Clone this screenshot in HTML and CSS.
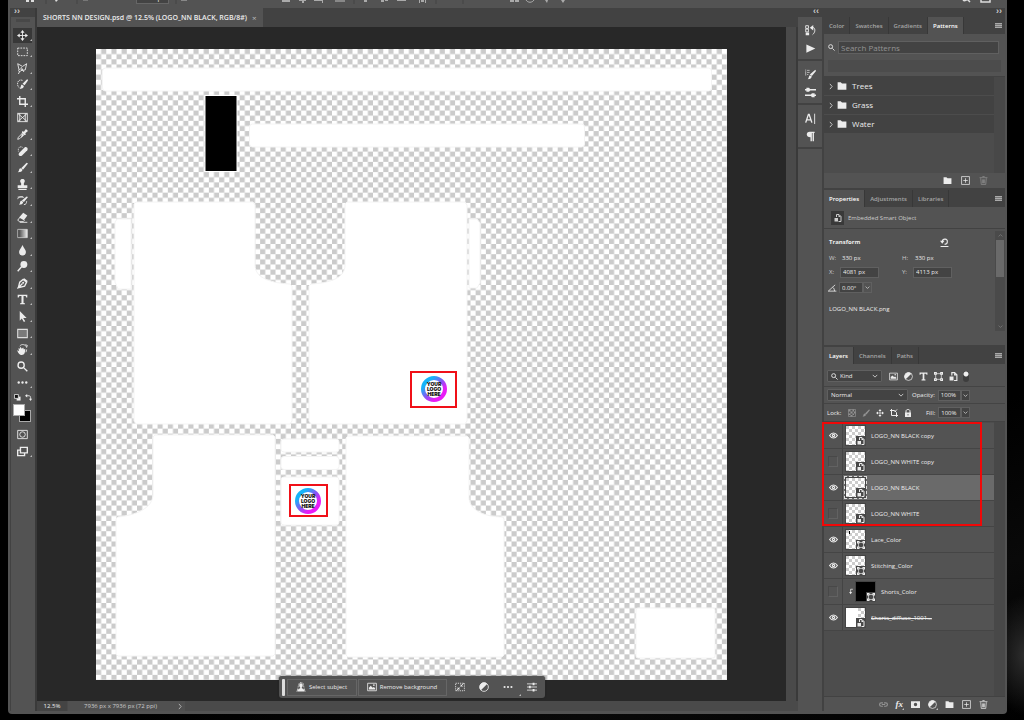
FILE: index.html
```html
<!DOCTYPE html>
<html lang="en">
<head>
<meta charset="utf-8">
<title>SHORTS NN DESIGN.psd</title>
<link rel="stylesheet" href="styles.css">
</head>
<body>
<svg class="defs" aria-hidden="true">
  <defs>
    <symbol id="move" viewBox="0 0 16 16"><path class="s" d="M8 2v12M2 8h12"/><path class="f" d="M8 0l3 4H5zM8 16l3-4H5zM0 8l4-3v6zM16 8l-4-3v6z"/></symbol>
    <symbol id="marquee" viewBox="0 0 16 16"><path class="s" stroke-dasharray="2.5 1.5" d="M1 3h14v11H1z"/></symbol>
    <symbol id="lasso" viewBox="0 0 16 16"><path class="s" d="M3 10L1 1l7 4 6-4-2 9-6 1M3 10c-2 2 1 4 3 1s-2-3-3-1M4 12l-2 4M6 6l4 7"/></symbol>
    <symbol id="quick" viewBox="0 0 16 16"><path class="s" stroke-dasharray="2 1" d="M8 2C3 0 0 4 1 9c1 4 4 5 6 4"/><path class="f" d="M15 0l1 2-5 7-3-2zM7 8l3 2c0 3-3 4-6 4 2-1 1-5 3-6z"/></symbol>
    <symbol id="crop" viewBox="0 0 16 16"><path class="b" d="M4 0v12h12M0 4h12v12"/></symbol>
    <symbol id="frame" viewBox="0 0 16 16"><path class="s" d="M1 2h14v12H1zM1 2l14 12M15 2L1 14M4 2v12M12 2v12"/></symbol>
    <symbol id="dropper" viewBox="0 0 16 16"><path class="s" d="M9 5l2 2-7 7-3 1 1-3z"/><path class="f" d="M8 3l2 1 3-4 3 3-4 3 1 2-2 1-4-4zM7 6l3 3-4 4z"/></symbol>
    <symbol id="heal" viewBox="0 0 16 16"><path class="f" d="M11 2c2-2 6 1 4 4l-8 8c-3 2-6-1-4-4z"/><path class="s" stroke-dasharray="1.5 1" d="M8 2C5 0 2 2 2 5v3"/></symbol>
    <symbol id="brush" viewBox="0 0 16 16"><path class="f" d="M14 1l2 1-7 9-3-2zM5 9l3 2c0 3-3 4-7 4 3-2 1-5 4-6z"/></symbol>
    <symbol id="stamp" viewBox="0 0 16 16"><path class="f" d="M8 0c4 0 4 4 2 6v3h5v4H1V9h5V6C4 4 4 0 8 0zM2 14h12v2H2z"/></symbol>
    <symbol id="history" viewBox="0 0 16 16"><path class="f" d="M14 2l2 1-6 7-3-2zM6 8l3 2c0 3-3 4-6 4 2-2 1-5 3-6z"/><path class="s" d="M1 3h8M1 6c1-4 7-5 9-2M10 14c3 0 4-2 4-5"/></symbol>
    <symbol id="eraser" viewBox="0 0 16 16"><path class="f" d="M9 1l6 4-5 7-7-4z"/><path class="s" d="M4 8l-3 4 3 2h5l2-2M4 15h11"/></symbol>
    <symbol id="gradient" viewBox="0 0 16 16"><path fill="url(#fade)" stroke="#ddd" d="M1 2h14v12H1z"/></symbol>
    <symbol id="drop" viewBox="0 0 16 16"><path class="f" d="M8 0c2 5 5 7 5 10 0 7-10 7-10 0 0-3 3-5 5-10z"/></symbol>
    <symbol id="dodge" viewBox="0 0 16 16"><circle class="f" cx="10" cy="5" r="5"/><path class="b" d="M7 8l-6 7"/></symbol>
    <symbol id="pen" viewBox="0 0 16 16"><path class="b" d="M2 14L4 6l5-4 5 4-3 6-9 2 6-6M10 1l5 4"/><circle class="f" cx="9" cy="7" r="1.5"/></symbol>
    <symbol id="type" viewBox="0 0 16 16"><path class="f" d="M1 1h14v4h-1.500l-1-2H9.500v10l2 .5V15h-7v-1.500l2-.5V3H3.500l-1 2H1z"/></symbol>
    <symbol id="arrow" viewBox="0 0 16 16"><path class="f" d="M4 0l10 10H9l3 5-2 1-3-5-3 3z"/></symbol>
    <symbol id="rect" viewBox="0 0 16 16"><path fill="#7a7a7a" stroke="#ddd" stroke-width="1.500" d="M1 2h14v12H1z"/></symbol>
    <symbol id="rotate" viewBox="0 0 16 16"><path class="f" d="M2 6l2 1 1-3 2 3 2-2 1 3 2-1c0 5-1 9-5 9s-6-5-7-7l3 1z"/><path class="s" d="M4 3c3-4 9-2 10 2M14 8l-1 4M12 1l3 1-1 3"/></symbol>
    <symbol id="zoom" viewBox="0 0 16 16"><circle class="b" cx="6" cy="6" r="4.500"/><path class="b" d="M10 10l5 5"/></symbol>
    <symbol id="dots" viewBox="0 0 16 16"><circle class="f" cx="2.500" cy="8" r="1.700"/><circle class="f" cx="8" cy="8" r="1.700"/><circle class="f" cx="13.500" cy="8" r="1.700"/></symbol>
    <symbol id="defcol" viewBox="0 0 16 16"><path class="f" d="M6 6h9v9H6z"/><path fill="#111" stroke="#ddd" stroke-width="2" d="M1 1h9v9H1z"/></symbol>
    <symbol id="swap" viewBox="0 0 16 16"><path class="b" d="M4 4h5c3 0 4 2 4 8"/><path class="f" d="M0 4l5-4v8zM9 11h7l-3 5z"/></symbol>
    <symbol id="mask" viewBox="0 0 16 16"><path class="s" d="M1 2h14v12H1z"/><circle class="s" cx="8" cy="8" r="4"/></symbol>
    <symbol id="screens" viewBox="0 0 16 16"><path class="b" d="M5 2h10v8H5zM4 6H1v8h10v-3"/></symbol>
    <symbol id="versions" viewBox="0 0 16 16"><path class="s" d="M1 1h4v4H1zM1 6h4v4H1zM9 4h4c2 2 2 7-2 10"/><path class="f" d="M1 11h5v4H1zM7 4l5-4v8z"/></symbol>
    <symbol id="play" viewBox="0 0 16 16"><path class="f" d="M2 2l13 6-13 6z"/></symbol>
    <symbol id="brushes" viewBox="0 0 16 16"><path class="s" stroke-dasharray="1 .7" d="M1 1v9M3 2h4M3 5h4M3 8h2"/><path class="f" d="M15 1l1 2-6 7-3-2zM7 9l3 2c-1 3-3 4-6 4 2-2 1-4 3-6z"/></symbol>
    <symbol id="sliders" viewBox="0 0 16 16"><path class="b" d="M0 4h16M0 12h16"/><path class="f" d="M2 1h4l2 3-2 3H2zM10 9h4v6h-4l-2-3z"/></symbol>
    <symbol id="glyphs" viewBox="0 0 16 16"><path class="b" d="M1 14L5 2h1l4 12M3 10h5"/><path class="s" d="M14 1v15"/></symbol>
    <symbol id="para" viewBox="0 0 16 16"><path class="f" d="M7 1h7v2h-1v12h-2V3h-1v12H8V9C1 9 1 1 7 1z"/></symbol>
    <symbol id="folder" viewBox="0 0 16 16"><path class="f" d="M1 2h5l2 2h7v10H1z"/></symbol>
    <symbol id="plus" viewBox="0 0 16 16"><path class="s" d="M1 1h14v14H1zM8 4v8M4 8h8"/></symbol>
    <symbol id="trash" viewBox="0 0 16 16"><path class="s" d="M3 4l1 11h8l1-11M1 3h14M6 1h4M6 6v7M8 6v7M10 6v7"/></symbol>
    <symbol id="smart" viewBox="0 0 16 16"><path class="b" d="M5 6V1h5l4 4v10H9"/><path class="f" d="M9 1l5 5H9zM1 8h7v7H1z"/></symbol>
    <symbol id="undo" viewBox="0 0 16 16"><path class="b" d="M4 6c1-6 10-5 9 1 0 3-3 4-5 4M1 15h14"/><path class="f" d="M0 5h8l-4 5z"/></symbol>
    <symbol id="angle" viewBox="0 0 16 16"><path class="s" d="M13 3L2 13h13M9 7c2 1 3 3 3 6"/></symbol>
    <symbol id="down" viewBox="0 0 16 16"><path class="b" d="M2 5l6 6 6-6"/></symbol>
    <symbol id="up" viewBox="0 0 16 16"><path class="b" d="M2 11l6-6 6 6"/></symbol>
    <symbol id="right" viewBox="0 0 16 16"><path class="b" d="M5 1l6 7-6 7"/></symbol>
    <symbol id="image" viewBox="0 0 16 16"><path class="s" d="M1 2h14v12H1z"/><path class="f" d="M3 12V9l3-3 3 3 2-1 2 2v2z"/><circle class="f" cx="11" cy="5" r="1.300"/></symbol>
    <symbol id="half" viewBox="0 0 16 16"><circle class="s" cx="8" cy="8" r="7"/><path class="f" d="M13 3A7 7 0 003 13z"/></symbol>
    <symbol id="path" viewBox="0 0 16 16"><path class="s" d="M3 3h10v10H3z"/><path class="f" d="M0 0h5v5H0zM11 0h5v5h-5zM0 11h5v5H0zM11 11h5v5h-5z"/><path fill="#535353" d="M2 2h1v1H2zM13 2h1v1h-1zM2 13h1v1H2zM13 13h1v1h-1z"/></symbol>
    <symbol id="grid" viewBox="0 0 16 16"><path class="s" d="M1 1h14v14H1z"/><path class="f" d="M1 1h4v4H1zM9 1h3v4H9zM5 5h4v4H5zM12 5h3v4h-3zM1 9h4v3H1zM9 9h3v3H9zM5 12h4v3H5z"/></symbol>
    <symbol id="artlock" viewBox="0 0 16 16"><path class="b" d="M3 0v13h13M0 3h9l4 4v9M9 6l5-5"/></symbol>
    <symbol id="lock" viewBox="0 0 16 16"><path class="b" d="M4 8V4c0-4 8-4 8 0v4"/><path class="f" d="M2 7h12v9H2z"/><path class="k" d="M8 10v3"/></symbol>
    <symbol id="eye" viewBox="0 0 16 16"><path class="b" d="M1 8c4-6 10-6 14 0-4 6-10 6-14 0z"/><circle class="f" cx="8" cy="8" r="3"/><circle fill="#535353" cx="8" cy="8" r="1"/></symbol>
    <symbol id="link" viewBox="0 0 16 16"><path class="b" d="M7 5H4c-4 0-4 6 0 6h3M9 5h3c4 0 4 6 0 6H9M5 8h6"/></symbol>
    <symbol id="addmask" viewBox="0 0 16 16"><path class="f" fill-rule="evenodd" d="M0 2h16v12H0zM8 5a3 3 0 100 6 3 3 0 000-6z"/></symbol>
    <symbol id="person" viewBox="0 0 16 16"><path class="s" stroke-dasharray="1.500 1" d="M1 15C3 12 3 10 4 5c1-6 8-6 8 0 1 5 1 7 3 10"/><path class="f" d="M8 2c4 0 3 6 1 7 1 2 5 2 5 6H2c0-4 4-4 5-6-2-1-3-7 1-7z"/></symbol>
    <symbol id="shrink" viewBox="0 0 16 16"><path class="s" stroke-dasharray="2 1.500" d="M1 2h14v12H1z"/><path class="s" d="M14 2l-5 5M2 14l5-5"/><path class="f" d="M9 3v4h4zM3 9h4v4z"/></symbol>
    <symbol id="tune" viewBox="0 0 16 16"><path class="s" d="M0 3h16M0 8h16M0 13h16"/><path class="f" d="M9 1h3v4H9zM3 6h3v4H3zM9 11h3v4H9z"/></symbol>
    <symbol id="clip" viewBox="0 0 16 16"><path class="b" d="M13 2H7v9"/><path class="f" d="M3 9h8l-4 6z"/></symbol>
    <linearGradient id="fade"><stop offset="0" stop-color="#333"/><stop offset="1" stop-color="#eee"/></linearGradient>
    <linearGradient id="ring" x1="0" y1="0" x2="1" y2="1"><stop offset="0.2" stop-color="#16b4f8"/><stop offset="0.5" stop-color="#8a54f4"/><stop offset="0.75" stop-color="#e81cf6"/></linearGradient>
    <pattern id="checker" x="96" y="49" width="10.26" height="10.26" patternUnits="userSpaceOnUse"><path fill="#fff" d="M0 0h10.260v10.260H0z"/><path fill="#cbcbcb" d="M5.130 0h5.130v5.130H5.130zM0 5.130h5.130v5.130H0z"/></pattern>
    <g id="logo"><circle r="11" fill="#fff" stroke="url(#ring)" stroke-width="4"/><text class="logo-text" text-anchor="middle"><tspan x="0" y="-3">YOUR</tspan><tspan x="0" y="2">LOGO</tspan><tspan x="0" y="7">HERE</tspan></text></g>
  </defs>
</svg>

<main class="window">
  <header class="options">
    <svg class="options-left" viewBox="0 0 126 8" width="126" height="8"><path fill="#ddd" d="M16 0h3v2h-3zM21 0h3v2h-3zM45 0h3l-2 2z"/><path fill="#777" d="M73 0h5v1h-5z"/><path stroke="#444" d="M36 0v4M67 0v4"/></svg>
    <select class="mode" aria-label="Auto-select"><option>Group</option></select>
    <svg class="options-mid" viewBox="167 0 460 8" width="460" height="8"><path fill="#888" d="M179 0h6v1h-6zM333 0h10v2h-10z"/><path fill="#aaa" d="M280 0h8v2h-8zM297 0h7v1h-7zM300 1h2v2h-2zM312 0h8v1h-8zM320 0h1v3h-1zM362 0h3v2h-3zM379 0h3v2h-3zM383 0h3v1h-3zM395 0h9v1h-9zM417 0h1v3h-1zM423 0h1v3h-1zM419 0h3v2h-3zM508 0h4v2h-4zM513 0h4v2h-4zM543 0h3l-1 3zM559 0h4l-2 3z"/><path fill="none" stroke="#aaa" d="M524 0c2 3 6 3 8 0"/><path stroke="#444" d="M174 0v4M352 0v4M434 0v4M461 0v4"/></svg>
    <svg class="options-right" viewBox="955 0 50 8" width="50" height="8"><path fill="none" stroke="#ddd" stroke-width="1.500" d="M963 0c1 1 3 1 4-1l3 3M981 0v2h9V0"/></svg>
  </header>

  <div class="workspace">
    <aside class="toolbox">
      <div class="collapse">››</div>
      <div class="grip"></div>
      <div class="tools">
        <button class="tool active" aria-label="Move"><svg><use href="#move"/></svg></button>
        <button class="tool" aria-label="Marquee"><svg><use href="#marquee"/></svg></button>
        <button class="tool" aria-label="Lasso"><svg><use href="#lasso"/></svg></button>
        <button class="tool" aria-label="Quick selection"><svg><use href="#quick"/></svg></button>
        <button class="tool" aria-label="Crop"><svg><use href="#crop"/></svg></button>
        <button class="tool plain" aria-label="Frame"><svg><use href="#frame"/></svg></button>
        <button class="tool" aria-label="Eyedropper"><svg><use href="#dropper"/></svg></button>
        <button class="tool" aria-label="Healing brush"><svg><use href="#heal"/></svg></button>
        <button class="tool" aria-label="Brush"><svg><use href="#brush"/></svg></button>
        <button class="tool" aria-label="Clone stamp"><svg><use href="#stamp"/></svg></button>
        <button class="tool" aria-label="History brush"><svg><use href="#history"/></svg></button>
        <button class="tool" aria-label="Eraser"><svg><use href="#eraser"/></svg></button>
        <button class="tool" aria-label="Gradient"><svg><use href="#gradient"/></svg></button>
        <button class="tool" aria-label="Blur"><svg><use href="#drop"/></svg></button>
        <button class="tool" aria-label="Dodge"><svg><use href="#dodge"/></svg></button>
        <button class="tool" aria-label="Pen"><svg><use href="#pen"/></svg></button>
        <button class="tool" aria-label="Type"><svg><use href="#type"/></svg></button>
        <button class="tool" aria-label="Path selection"><svg><use href="#arrow"/></svg></button>
        <button class="tool" aria-label="Rectangle"><svg><use href="#rect"/></svg></button>
        <button class="tool" aria-label="Rotate view"><svg><use href="#rotate"/></svg></button>
        <button class="tool plain" aria-label="Zoom"><svg><use href="#zoom"/></svg></button>
        <button class="tool" aria-label="More tools"><svg><use href="#dots"/></svg></button>
      </div>
      <div class="color-actions">
        <button aria-label="Default colors"><svg><use href="#defcol"/></svg></button>
        <button aria-label="Swap colors"><svg><use href="#swap"/></svg></button>
      </div>
      <div class="swatches"><button class="back" aria-label="Background color"></button><button class="fore" aria-label="Foreground color"></button></div>
      <button class="tool plain view" aria-label="Quick mask"><svg><use href="#mask"/></svg></button>
      <button class="tool view" aria-label="Screen mode"><svg><use href="#screens"/></svg></button>
    </aside>

    <section class="document">
      <div class="doc-tabs"><div class="doc-tab"><span>SHORTS NN DESIGN.psd @ 12.5% (LOGO_NN BLACK, RGB/8#)</span><button aria-label="Close">×</button></div></div>
      <div class="stage">
        <div class="canvas">
          <svg class="artboard" viewBox="96 49 631 631">
            <path fill="url(#checker)" d="M96 49h631v631H96z"/>
            <g class="piece">
              <rect x="102.500" y="68" width="609" height="23" rx="3"/>
              <rect x="249.500" y="124" width="335" height="23" rx="3"/>
              <path d="M117 219h14v70h-13l-3-7v-60z"/><path d="M469 219h8l3 4v60l-3 5h-8z"/>
              <path d="M136 202h117l2 3v60c0 14 18 18 35 19l2 2v135l-2 3H136l-2-3V204z"/>
              <path d="M347 202h118l2 3v216l-2 3H311l-2-3V286l2-2c17-1 34-5 34-19v-61z"/>
              <path d="M155 435h118l2 2v217l-2 2H118l-2-2V519l2-2c17-2 35-8 35-23v-57z"/>
              <path d="M348 436h119l2 2v59c0 14 17 20 34 20l1 2v136l-2 2H348l-2-2V438z"/>
              <rect x="281" y="439" width="58" height="13" rx="3"/>
              <rect x="281" y="456.500" width="58" height="13" rx="3"/>
              <rect x="281" y="477" width="58" height="48" rx="3"/>
              <rect x="636" y="608" width="79" height="50" rx="2"/>
            </g>
            <rect x="205" y="95.500" width="32" height="76" stroke="#fff"/>
            <use href="#logo" x="434" y="389"/>
            <use href="#logo" x="308" y="501"/>
            <g fill="none" stroke="#f01018" stroke-width="2"><rect x="411" y="372" width="45" height="35"/><rect x="290" y="485" width="37" height="31"/></g>
          </svg>
          <div class="taskbar">
            <span class="handle"></span>
            <button class="task"><svg><use href="#person"/></svg>Select subject</button>
            <button class="task wide"><svg><use href="#image"/></svg>Remove background</button>
            <button class="task-icon" aria-label="Transform"><svg><use href="#shrink"/></svg></button>
            <button class="task-icon" aria-label="Adjustment"><svg><use href="#half"/></svg></button>
            <button class="task-icon more" aria-label="More"><svg><use href="#dots"/></svg></button>
            <button class="task-icon" aria-label="Properties"><svg><use href="#tune"/></svg></button>
          </div>
        </div>
        <div class="doc-scroll"></div>
      </div>
      <footer class="status"><span class="zoom-level">12.5%</span><button class="doc-info">7936 px x 7936 px (72 ppi)<svg><use href="#right"/></svg></button></footer>
    </section>

    <aside class="dock">
      <div class="collapse end">‹‹</div>
      <div class="dock-group"><button aria-label="Versions"><svg><use href="#versions"/></svg></button><button aria-label="Actions"><svg><use href="#play"/></svg></button></div>
      <div class="dock-group"><button aria-label="Brushes"><svg><use href="#brushes"/></svg></button><button aria-label="Brush settings"><svg><use href="#sliders"/></svg></button></div>
      <div class="dock-group"><button aria-label="Character"><svg><use href="#glyphs"/></svg></button><button aria-label="Paragraph"><svg><use href="#para"/></svg></button></div>
      <div class="dock-rest"></div>
    </aside>

    <aside class="panels">
      <div class="collapse end">››</div>
      <section class="panel patterns">
        <nav class="tabs"><button>Color</button><button>Swatches</button><button>Gradients</button><button class="on">Patterns</button><span class="menu"></span></nav>
        <label class="search"><svg><use href="#zoom"/></svg><input type="text" placeholder="Search Patterns"></label>
        <div class="recent"></div>
        <div class="pattern-list">
          <button><svg class="chev"><use href="#right"/></svg><svg><use href="#folder"/></svg>Trees</button>
          <button><svg class="chev"><use href="#right"/></svg><svg><use href="#folder"/></svg>Grass</button>
          <button><svg class="chev"><use href="#right"/></svg><svg><use href="#folder"/></svg>Water</button>
        </div>
        <footer class="panel-foot"><button aria-label="New group"><svg><use href="#folder"/></svg></button><button aria-label="New pattern"><svg><use href="#plus"/></svg></button><button class="dim" aria-label="Delete"><svg><use href="#trash"/></svg></button></footer>
      </section>

      <section class="panel properties">
        <nav class="tabs"><button class="on">Properties</button><button>Adjustments</button><button>Libraries</button><span class="menu"></span></nav>
        <div class="object"><span class="object-icon"><svg><use href="#smart"/></svg></span>Embedded Smart Object</div>
        <div class="props">
          <div class="props-main">
            <div class="transform"><b>Transform</b><button aria-label="Reset"><svg><use href="#undo"/></svg></button></div>
            <div class="fields">
              <span>W:</span><span class="value">330 px</span><span>H:</span><span class="value">330 px</span>
              <label for="px">X:</label><input id="px" type="text" value="4081 px"><label for="py">Y:</label><input id="py" type="text" value="4113 px">
            </div>
            <div class="angle"><svg><use href="#angle"/></svg><input type="text" value="0.00°" aria-label="Angle"><button aria-label="Angle presets"><svg><use href="#down"/></svg></button></div>
            <p class="filename">LOGO_NN BLACK.png</p>
          </div>
          <div class="bar"><svg><use href="#up"/></svg><span class="thumb"></span><svg><use href="#down"/></svg></div>
        </div>
      </section>

      <section class="panel layers">
        <nav class="tabs"><button class="on">Layers</button><button>Channels</button><button>Paths</button><span class="menu"></span></nav>
        <div class="filter">
          <label class="kind"><svg><use href="#zoom"/></svg><select aria-label="Filter"><option>Kind</option></select><svg class="chev"><use href="#down"/></svg></label>
          <button aria-label="Pixel"><svg><use href="#image"/></svg></button><button aria-label="Adjustment"><svg><use href="#half"/></svg></button><button aria-label="Type"><svg><use href="#type"/></svg></button><button aria-label="Shape"><svg><use href="#path"/></svg></button><button aria-label="Smart object"><svg><use href="#smart"/></svg></button><button class="toggle" aria-label="Filter on"></button>
        </div>
        <div class="blend">
          <label class="blend-mode"><select aria-label="Blend mode"><option>Normal</option></select><svg class="chev"><use href="#down"/></svg></label>
          <label class="amount">Opacity:<input type="text" value="100%"></label><button class="drop" aria-label="Opacity slider"><svg><use href="#down"/></svg></button>
        </div>
        <div class="locks">
          <span>Lock:</span><button class="dim" aria-label="Lock transparency"><svg><use href="#grid"/></svg></button><button class="dim" aria-label="Lock pixels"><svg><use href="#brush"/></svg></button><button aria-label="Lock position"><svg><use href="#move"/></svg></button><button aria-label="Lock artboard"><svg><use href="#artlock"/></svg></button><button aria-label="Lock all"><svg><use href="#lock"/></svg></button>
          <label class="amount">Fill:<input type="text" value="100%"></label><button class="drop" aria-label="Fill slider"><svg><use href="#down"/></svg></button>
        </div>
        <div class="layer-area">
          <ul class="layer-list">
            <li><button class="vis" aria-label="Hide"><svg><use href="#eye"/></svg></button><span class="thumbnail"><svg class="badge"><use href="#smart"/></svg></span>LOGO_NN BLACK copy</li>
            <li><button class="vis off" aria-label="Show"></button><span class="thumbnail"><svg class="badge"><use href="#smart"/></svg></span>LOGO_NN WHITE copy</li>
            <li class="selected"><button class="vis" aria-label="Hide"><svg><use href="#eye"/></svg></button><span class="thumbnail"><svg class="badge"><use href="#smart"/></svg></span>LOGO_NN BLACK</li>
            <li><button class="vis off" aria-label="Show"></button><span class="thumbnail"><svg class="badge"><use href="#smart"/></svg></span>LOGO_NN WHITE</li>
            <li><button class="vis" aria-label="Hide"><svg><use href="#eye"/></svg></button><span class="thumbnail lace"><svg class="badge"><use href="#path"/></svg></span>Lace_Color</li>
            <li><button class="vis" aria-label="Hide"><svg><use href="#eye"/></svg></button><span class="thumbnail"><svg class="badge"><use href="#path"/></svg></span>Stitching_Color</li>
            <li><button class="vis off" aria-label="Show"></button><svg class="clip"><use href="#clip"/></svg><span class="thumbnail black"><svg class="badge"><use href="#path"/></svg></span>Shorts_Color</li>
            <li><button class="vis" aria-label="Hide"><svg><use href="#eye"/></svg></button><span class="thumbnail diffuse"><svg class="badge"><use href="#smart"/></svg></span><s>Shorts_diffuse_1001...</s></li>
          </ul>
          <div class="highlight"></div>
        </div>
        <footer class="panel-foot"><button class="dim" aria-label="Link layers"><svg><use href="#link"/></svg></button><button class="fx more">fx</button><button aria-label="Add mask"><svg><use href="#addmask"/></svg></button><button class="more" aria-label="Adjustment layer"><svg><use href="#half"/></svg></button><button aria-label="New group"><svg><use href="#folder"/></svg></button><button aria-label="New layer"><svg><use href="#plus"/></svg></button><button aria-label="Delete"><svg><use href="#trash"/></svg></button></footer>
      </section>
    </aside>
  </div>
</main>
</body>
</html>
```
FILE: styles.css
```css
* { box-sizing: border-box; }
body {
  margin: 0;
  height: 100vh;
  padding: 0 17px 6px 8px;
  overflow: hidden;
  background:
    radial-gradient(ellipse 34px 60px at 100% 655px, #2c2c2c, transparent),
    linear-gradient(160deg, transparent 70%, #090909 85%, #000) #000;
  font: 500 6px/10px "Open Sans", "Noto Sans", sans-serif;
  color: #ececec;
}
button, input, select {
  font: inherit;
  color: inherit;
  border: 0;
  padding: 0;
  margin: 0;
  background: none;
  appearance: none;
  border-radius: 0;
}
button { display: flex; align-items: center; justify-content: center; }
svg { width: 10px; height: 10px; flex: none; display: block; }
.defs { position: absolute; width: 0; height: 0; }
.f { fill: currentColor; }
.s { fill: none; stroke: currentColor; stroke-width: 1.3; }
.b { fill: none; stroke: currentColor; stroke-width: 2; }
.k { fill: none; stroke: #444; stroke-width: 1.5; }

.window {
  height: 100%;
  display: flex;
  flex-direction: column;
  background: #424242;
  border: solid #535353;
  border-width: 0 2px 3px;
  border-radius: 0 0 4px 4px;
  overflow: hidden;
}
.options { display: flex; align-items: flex-start; height: 8px; background: #535353; overflow: hidden; flex: none; }
.options-left, .options-mid, .options-right { width: auto; height: 8px; }
.options-right { margin-left: auto; }
.mode { width: 33px; height: 12px; margin-top: -8px; padding-left: 4px; background: #434343; border: 1px solid #666; font-size: 7px; }
.workspace { flex: 1; min-height: 0; display: flex; }
.collapse { height: 9px; font: bold 9px/7px "Liberation Sans", sans-serif; color: #ccc; padding: 0 3px; background: #424242; flex: none; }
.collapse.end { text-align: right; }

.toolbox { width: 27px; flex: none; display: flex; flex-direction: column; padding: 0 2px 0 1px; background: linear-gradient(90deg, #424242 1px, #535353 1px, #535353 25px, #3a3a3a 25px); }
.grip { height: 10px; padding: 2px 5px; }
.grip::before { content: ""; display: block; height: 3px; background: #484848; }
.tools { display: grid; grid-template-rows: repeat(22, 1fr); height: 364px; flex: none; }
.tool { position: relative; width: 23px; }
.tool svg { width: 11px; height: 11px; }
.tool::after, .more::after { content: ""; position: absolute; right: 2px; bottom: 3px; border: 1px solid; border-color: transparent #bbb #bbb transparent; }
.tool.plain::after { display: none; }
.tool.active { background: linear-gradient(#383838, #383838) 2px 1px / 19px 15px no-repeat; }
.color-actions { display: flex; justify-content: center; gap: 4px; height: 13px; align-items: center; }
.color-actions svg { width: 7px; height: 7px; }
.swatches { position: relative; height: 20px; margin-bottom: 2px; }
.fore, .back { position: absolute; width: 12px; height: 12px; border: 1px solid #aaa; }
.fore { left: 2px; top: 0; background: #fff; }
.back { left: 8px; top: 6px; background: #000; }
.view { height: 17px; }

.document { flex: 1; min-width: 0; display: flex; flex-direction: column; }
.doc-tabs { height: 19px; flex: none; display: flex; background: #424242; }
.doc-tab { display: flex; align-items: center; gap: 5px; padding: 0 6px; background: #535353; font-size: 7px; font-weight: 600; white-space: nowrap; }
.doc-tab button { font-size: 8px; font-weight: 400; color: #bbb; }
.stage { flex: 1; min-height: 0; display: flex; }
.canvas { position: relative; flex: 1; min-width: 0; padding: 22px 0 21px; background: #282828; }
.artboard { width: 100%; height: 100%; }
.piece { fill: #fff; stroke: #f4f4f4; stroke-width: 1; }
.logo-text { font: 900 5px "Inter", sans-serif; fill: #111; }
.doc-scroll { width: 12px; background: linear-gradient(90deg, #4a4a4a 10px, #3a3a3a 10px); }
.taskbar { position: absolute; bottom: 3px; left: 50%; transform: translateX(-50%); display: flex; align-items: center; height: 22px; width: 266px; padding: 0 1px 0 3px; background: #535353; border-radius: 3px; box-shadow: 0 0 2px #222; }
.handle { width: 3px; height: 17px; margin-right: 2px; background: #ddd; border-radius: 1px; flex: none; }
.task { height: 17px; width: 70px; gap: 3px; border: 1px solid #666; white-space: nowrap; flex: none; }
.task.wide { width: 89px; margin: 0 2px 0 1px; }
.task-icon { flex: 1; height: 17px; position: relative; }
.more { position: relative; }
.status { display: flex; height: 10px; flex: none; background: #4a4a4a; color: #ccc; }
.zoom-level { width: 30px; text-align: center; background: #444; color: #eee; }
.doc-info { width: 117px; gap: 20px; padding-left: 14px; margin-left: 1px; background: #505050; }
.doc-info svg { width: 6px; height: 7px; }

.dock { width: 24px; margin-right: 2px; flex: none; display: flex; flex-direction: column; gap: 2px; }
.dock .collapse { margin-bottom: -2px; }
.dock-group { height: 42px; padding-top: 4px; display: grid; grid-template-rows: 18px 18px; background: #535353; }
.dock-group button { width: 24px; }
.dock-group svg { width: 11px; height: 11px; }
.dock-rest { flex: 1; background: #535353; }

.panels { width: 181px; flex: none; display: flex; flex-direction: column; }
.panel { background: #535353; display: flex; flex-direction: column; flex: none; }
.patterns { height: 171px; margin-bottom: 2px; }
.properties { height: 155px; margin-bottom: 2px; }
.layers { flex: 1; min-height: 0; }
.tabs { display: flex; height: 17px; flex: none; background: #424242; font-weight: 600; color: #a6a6a6; }
.tabs button { padding: 0 5px; border-right: 1px solid #383838; font-weight: 600; }
.tabs .on { background: #535353; color: #fff; }
.menu { width: 7px; height: 5px; margin: 6px 3px 0 auto; background: repeating-linear-gradient(#aaa 0 1px, #777 1px 2px); }
.search { display: flex; align-items: center; height: 14px; margin: 6px 6px 6px 4px; gap: 3px; }
.search svg { width: 7px; height: 7px; }
.search input { flex: 1; min-width: 0; height: 13px; padding: 0 2px; background: #434343; border: 1px solid #606060; font-size: 8px; font-weight: 400; }
.search input::placeholder { color: #949494; opacity: 1; }
.recent { height: 12px; margin: 0 4px 4px; background: #4c4c4c; }
.pattern-list { flex: 1; border-top: 1px solid #424242; padding-right: 11px; background: linear-gradient(270deg, #484848 11px, #4c4c4c 11px); }
.pattern-list button { width: 100%; height: 18px; margin-bottom: 1px; padding-left: 4px; gap: 3px; justify-content: flex-start; background: #424242; font-size: 8px; }
.pattern-list button svg:nth-child(2) { margin-right: 2px; }
.pattern-list .chev { width: 6px; height: 7px; }
.panel-foot { display: flex; justify-content: flex-end; align-items: center; gap: 8px; height: 15px; padding-right: 17px; flex: none; }
.patterns .panel-foot { gap: 9px; }
.panel-foot svg { width: 9px; height: 9px; }
.panel-foot button { height: 12px; }
.dim { color: #929292; }

.object { display: flex; align-items: center; gap: 4px; height: 22px; padding-left: 7px; flex: none; border-bottom: 1px solid #424242; }
.object-icon { width: 13px; height: 14px; display: grid; place-items: center; background: #393939; }
.object-icon svg { width: 8px; height: 8px; }
.props { flex: 1; display: flex; }
.props-main { flex: 1; padding: 7px 0 0 5px; }
.transform { display: flex; height: 12px; width: 120px; align-items: center; justify-content: space-between; }
.transform svg { width: 9px; height: 9px; }
.fields { display: grid; grid-template-columns: 13px 60px 13px 60px; grid-template-rows: 12px 12px; row-gap: 2px; margin-top: 4px; align-items: center; }
.fields input, .angle input { width: 39px; height: 11px; margin-left: -2px; padding-left: 2px; background: #434343; border: 1px solid #606060; }
.fields > :nth-child(odd), .object { color: #ccc; }
.angle { display: flex; align-items: center; margin: 4px 0 0 -2px; height: 11px; }
.angle input { width: 24px; margin-left: 2px; }
.angle button { width: 9px; height: 11px; border: 1px solid #606060; }
.angle button svg { width: 5px; height: 5px; }
.filename { margin: 11px 0 0; }
.bar { width: 10px; margin: 2px 0; display: flex; flex-direction: column; align-items: center; background: #4a4a4a; height: 100px; color: #888; }
.bar svg { width: 5px; height: 9px; }
.thumb { width: 8px; height: 37px; background: #6a6a6a; }
.bar svg:last-child { margin-top: auto; }

.filter, .blend, .locks { display: flex; align-items: center; flex: none; border-bottom: 1px solid #444; }
.filter { height: 23px; padding-top: 2px; gap: 5px; padding-left: 3px; }
.filter svg { width: 9px; height: 9px; }
.filter button { width: 10px; height: 11px; }
.kind, .blend-mode { display: flex; align-items: center; background: #434343; border: 1px solid #606060; height: 12px; padding: 0 3px; border-radius: 1px; }
.kind { width: 55px; gap: 2px; margin-right: 1px; }
.kind svg { width: 7px; height: 7px; }
.kind select, .blend-mode select { flex: 1; min-width: 0; }
.kind .chev, .blend-mode .chev { width: 6px; height: 6px; }
.filter .toggle { width: 6px; height: 11px; border-radius: 3px; background: radial-gradient(circle at 3px 3px, #eee 2px, #3d3d3d 3px); }
.blend { height: 17px; padding-left: 3px; }
.blend-mode { width: 81px; }
.amount { display: flex; align-items: center; gap: 3px; }
.blend .amount { margin-left: 4px; }
.amount input, .drop { height: 11px; background: #434343; border: 1px solid #606060; }
.amount input { width: 23px; padding-left: 2px; }
.drop { width: 9px; }
.drop svg { width: 5px; height: 5px; }
.locks { height: 18px; padding-left: 3px; }
.locks > button:not(.drop) { width: 14px; }
.locks > span { width: 18px; }
.locks > button:not(.drop) svg { width: 8px; height: 8px; }
.locks .amount { margin-left: 11px; }

.layer-area { position: relative; flex: 1; min-height: 0; background: linear-gradient(270deg, #484848 11px, #4d4d4d 11px); }
.layer-list { list-style: none; margin: 0 11px 0 0; padding: 1px 0 0; }
.layer-list li { display: flex; align-items: center; height: 26px; background: #535353; border-bottom: 1px solid #454545; }
.layer-list .selected { background: #6a6a6a; }
.vis { width: 19px; height: 25px; border-right: 1px solid #444; background: #535353; flex: none; }
.vis svg { width: 9px; height: 9px; }
.vis.off::before { content: ""; width: 8px; height: 9px; border: 1px solid; border-color: #484848 #626262 #626262 #484848; }
.thumbnail { position: relative; width: 21px; height: 21px; margin: 0 5px 0 2px; flex: none; border: 1px solid #444; background: repeating-conic-gradient(#fff 0 25%, #ccc 0 50%) 0 0 / 6px 6px; }
.selected .thumbnail { outline: 1px dashed #ddd; }
.badge { position: absolute; right: -1px; bottom: -1px; width: 10px; height: 10px; padding: 1px; background: #484848; }
.lace::before { content: ""; position: absolute; left: 3px; top: 1px; width: 1px; height: 3px; background: #000; }
.black { background: #000; }
.diffuse { background: linear-gradient(90deg, #fff 12px, transparent 12px), repeating-conic-gradient(#fff 0 25%, #ccc 0 50%) 0 0 / 6px 6px; }
.clip { width: 6px; height: 7px; margin: 0 -1px 0 5px; }
.highlight { position: absolute; left: -2px; top: 0; width: 160px; height: 104px; border: 2px solid #f00808; }
.layers .panel-foot { border-top: 1px solid #424242; }
.fx { font: italic bold 9px/10px "Liberation Serif", serif; }
.more::after { right: -1px; bottom: 0; }
```
